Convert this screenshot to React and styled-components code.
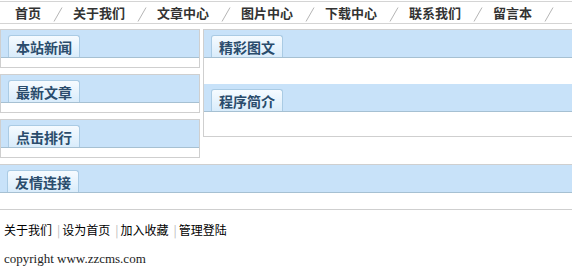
import React from "react";
import styled, { createGlobalStyle } from "styled-components";

const navItems = ["首页", "关于我们", "文章中心", "图片中心", "下载中心", "联系我们", "留言本"];
const leftBoxes = ["本站新闻", "最新文章", "点击排行"];
const rightSections = ["精彩图文", "程序简介"];
const footLinks = ["关于我们", "设为首页", "加入收藏", "管理登陆"];

const Slash = () => (
  <SlashSvg width="10" height="15" viewBox="0 0 10 15">
    <line x1="9" y1="0.5" x2="1" y2="14.5" stroke="#b4b4b4" strokeWidth="1" />
  </SlashSvg>
);

export default function App() {
  return (
    <>
      <GlobalStyle />
      <Page>
        <Nav>
          {navItems.map((item) => (
            <NavItem key={item}>
              <NavText>{item}</NavText>
              <Slash />
            </NavItem>
          ))}
        </Nav>

        <Main>
          <LeftCol>
            {leftBoxes.map((title) => (
              <Box key={title}>
                <Head>
                  <Tab>{title}</Tab>
                </Head>
                <BoxBody $h={9} />
              </Box>
            ))}
          </LeftCol>
          <RightCol>
            <Box>
              {rightSections.map((title, i) => (
                <React.Fragment key={title}>
                  <Head>
                    <Tab>{title}</Tab>
                  </Head>
                  <BoxBody $h={i === 0 ? 26 : 24} />
                </React.Fragment>
              ))}
            </Box>
          </RightCol>
        </Main>

        <Friend>
          <Head>
            <Tab>友情连接</Tab>
          </Head>
          <BoxBody $h={16} />
        </Friend>

        <Footer>
          <Links>
            {footLinks.map((l, i) => (
              <span key={l}>
                {i > 0 && <Sep>|</Sep>}
                {l}
              </span>
            ))}
          </Links>
          <Copy>copyright www.zzcms.com</Copy>
        </Footer>
      </Page>
    </>
  );
}

const GlobalStyle = createGlobalStyle`
  html, body {
    margin: 0;
    padding: 0;
    background: #fff;
    overflow: hidden;
  }
  body {
    font-family: "Noto Sans CJK SC", "Liberation Sans", sans-serif;
    font-size: 12px;
    color: #000;
  }
`;

const Page = styled("div")`
  width: 620px;
`;

const Nav = styled("div")`
  display: flex;
  align-items: center;
  margin-top: 1px;
  height: 21px;
  padding-left: 15px;
  border-top: 1px solid #d4d4d4;
  border-bottom: 1px solid #d4d4d4;
`;

const NavItem = styled("div")`
  display: flex;
  align-items: center;
`;

const NavText = styled("span")`
  font-size: 13px;
  font-weight: 700;
  color: #333;
  line-height: 15px;
`;

const SlashSvg = styled("svg")`
  display: block;
  margin: 3px 10px 0 12px;
`;

const Main = styled("div")`
  display: grid;
  grid-template-columns: 200px 1fr;
  column-gap: 3px;
  margin-top: 5px;
`;

const LeftCol = styled("div")`
  display: flex;
  flex-direction: column;
  gap: 6px;
`;

const RightCol = styled("div")`
  display: flex;
  flex-direction: column;
`;

const Box = styled("div")`
  border: 1px solid #cfcfcf;
`;

const Head = styled("div")`
  display: flex;
  align-items: flex-end;
  height: 27px;
  padding-left: 7px;
  background: #c8e2f9;
  border-bottom: 1px solid #a6c0d2;
`;

const Tab = styled("div")`
  height: 21px;
  padding: 0 7px;
  font-size: 14px;
  font-weight: 700;
  line-height: 22px;
  color: #2a4c6c;
  background: linear-gradient(#f6fbff, #d9ecfb);
  border: 1px solid #aacbe4;
  border-bottom: none;
  border-radius: 3px 3px 0 0;
`;

const BoxBody = styled("div")`
  height: ${(p) => p.$h}px;
  background: #fff;
`;

const Friend = styled("div")`
  margin-top: 6px;
  border-top: 1px solid #cfcfcf;
  border-bottom: 1px solid #cfcfcf;
`;

const Footer = styled("div")`
  padding: 12px 4px 0;
`;

const Links = styled("div")`
  font-size: 12px;
  line-height: 16px;
  color: #000;
`;

const Sep = styled("span")`
  color: #bbb;
  margin: 0 2px 0 5px;
`;

const Copy = styled("div")`
  margin-top: 13px;
  font-family: "Liberation Serif", serif;
  font-size: 13px;
  color: #222;
`;
